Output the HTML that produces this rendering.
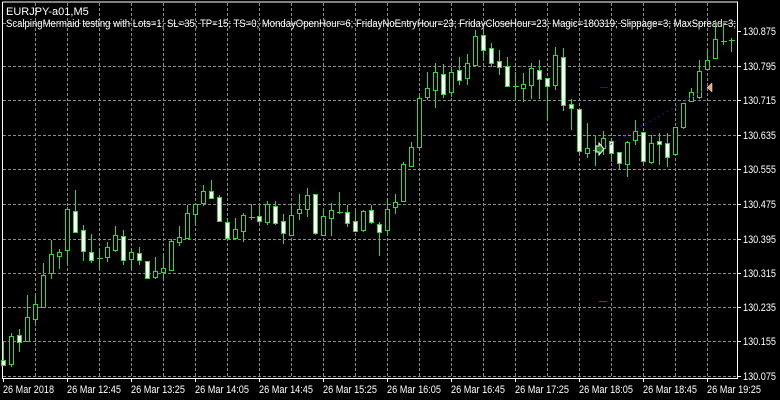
<!DOCTYPE html>
<html><head><meta charset="utf-8"><style>
html,body{margin:0;padding:0;background:#000;width:780px;height:400px;overflow:hidden}
svg{display:block}
text{font-family:"Liberation Sans",sans-serif;font-size:11px;fill:#fff}
.t{font-size:10.5px}
.p{font-size:10.5px}
</style></head><body>
<svg width="780" height="400" xmlns="http://www.w3.org/2000/svg">
<rect width="780" height="400" fill="#000"/>
<g stroke="#8c8c8c" stroke-width="1" stroke-dasharray="3 2" shape-rendering="crispEdges">
<path d="M3 23.5H737M3 66.5H737M3 100.5H737M3 135.5H737M3 169.5H737M3 204.5H737M3 239.5H737M3 273.5H737M3 307.5H737M3 341.5H737M3 376.5H737"/>
<path d="M35.5 3V378M67.5 3V378M99.5 3V378M131.5 3V378M163.5 3V378M195.5 3V378M227.5 3V378M259.5 3V378M291.5 3V378M323.5 3V378M355.5 3V378M387.5 3V378M419.5 3V378M451.5 3V378M483.5 3V378M515.5 3V378M547.5 3V378M579.5 3V378M611.5 3V378M643.5 3V378M675.5 3V378M707.5 3V378"/>
</g>
<g stroke="#fff" stroke-width="1" fill="none" shape-rendering="crispEdges">
<path d="M2.5 2V378.5H737.5V2H2.5"/>
<path d="M737 31.5h4M737 66.5h4M737 100.5h4M737 135.5h4M737 169.5h4M737 204.5h4M737 239.5h4M737 273.5h4M737 307.5h4M737 341.5h4M737 376.5h4"/>
<path d="M3.5 378v4M67.5 378v4M131.5 378v4M195.5 378v4M259.5 378v4M323.5 378v4M387.5 378v4M451.5 378v4M515.5 378v4M579.5 378v4M643.5 378v4M707.5 378v4"/>
</g>
<text x="6" y="15">EURJPY-a01,M5</text>
<text x="6" y="27" textLength="730" lengthAdjust="spacingAndGlyphs">ScalpingMermaid testing with Lots=1; SL=35; TP=15; TS=0; MondayOpenHour=6; FridayNoEntryHour=23; FridayCloseHour=23; Magic=180319; Slippage=3; MaxSpread=3;</text>
<g class="p">
<text x="743" y="35" textLength="33" lengthAdjust="spacingAndGlyphs">130.875</text><text x="743" y="70" textLength="33" lengthAdjust="spacingAndGlyphs">130.795</text><text x="743" y="104" textLength="33" lengthAdjust="spacingAndGlyphs">130.715</text><text x="743" y="139" textLength="33" lengthAdjust="spacingAndGlyphs">130.635</text><text x="743" y="173" textLength="33" lengthAdjust="spacingAndGlyphs">130.555</text><text x="743" y="208" textLength="33" lengthAdjust="spacingAndGlyphs">130.475</text><text x="743" y="243" textLength="33" lengthAdjust="spacingAndGlyphs">130.395</text><text x="743" y="277" textLength="33" lengthAdjust="spacingAndGlyphs">130.315</text><text x="743" y="311" textLength="33" lengthAdjust="spacingAndGlyphs">130.235</text><text x="743" y="345" textLength="33" lengthAdjust="spacingAndGlyphs">130.155</text><text x="743" y="380" textLength="33" lengthAdjust="spacingAndGlyphs">130.075</text>
</g>
<g class="t">
<text x="3" y="393" textLength="51" lengthAdjust="spacingAndGlyphs">26 Mar 2018</text><text x="67" y="393" textLength="54" lengthAdjust="spacingAndGlyphs">26 Mar 12:45</text><text x="131" y="393" textLength="54" lengthAdjust="spacingAndGlyphs">26 Mar 13:25</text><text x="195" y="393" textLength="54" lengthAdjust="spacingAndGlyphs">26 Mar 14:05</text><text x="259" y="393" textLength="54" lengthAdjust="spacingAndGlyphs">26 Mar 14:45</text><text x="323" y="393" textLength="54" lengthAdjust="spacingAndGlyphs">26 Mar 15:25</text><text x="387" y="393" textLength="54" lengthAdjust="spacingAndGlyphs">26 Mar 16:05</text><text x="451" y="393" textLength="54" lengthAdjust="spacingAndGlyphs">26 Mar 16:45</text><text x="515" y="393" textLength="54" lengthAdjust="spacingAndGlyphs">26 Mar 17:25</text><text x="579" y="393" textLength="54" lengthAdjust="spacingAndGlyphs">26 Mar 18:05</text><text x="643" y="393" textLength="54" lengthAdjust="spacingAndGlyphs">26 Mar 18:45</text><text x="707" y="393" textLength="54" lengthAdjust="spacingAndGlyphs">26 Mar 19:25</text>
</g>
<g stroke="#3fd23f" stroke-width="1" shape-rendering="crispEdges">
<path d="M3.5 342V366M11.5 333V367M19.5 329V352M27.5 295V341M35.5 295V323M43.5 263V307M51.5 240V279M59.5 249V269M67.5 207V263M75.5 190V232M83.5 225V261M91.5 234V263M99.5 248V269M107.5 242V262M115.5 226V252M123.5 230V265M131.5 248V269M139.5 247V265M147.5 261V279M155.5 257V279M163.5 254V280M171.5 239V270M179.5 226V246M187.5 205V238M195.5 204V226M203.5 185V206M211.5 180V198M219.5 195V222M227.5 218V238M235.5 218V238M243.5 213V242M251.5 204V220M259.5 206V225M267.5 201V225M275.5 201V225M283.5 214V244M291.5 205V235M299.5 194V220M307.5 188V217M315.5 194V235M323.5 210V235M331.5 203V236M339.5 192V214M347.5 205V227M355.5 211V232M363.5 210V232M371.5 205V224M379.5 222V256M387.5 198V233M395.5 194V214M403.5 162V201M411.5 142V166M419.5 96V147M427.5 72V100M435.5 63V108M443.5 64V98M451.5 67V97M459.5 57V85M467.5 54V85M475.5 30V65M483.5 30V58M491.5 43V67M499.5 50V75M507.5 57V86M515.5 72V99M523.5 73V102M531.5 63V99M539.5 60V99M547.5 78V120M555.5 47V90M563.5 48V111M571.5 99V130M579.5 109V153M587.5 123V158M595.5 136V166M603.5 131V155M611.5 138V162M619.5 152V170M627.5 141V177M635.5 120V145M643.5 132V163M651.5 135V164M659.5 133V165M667.5 133V167M675.5 127V155M683.5 103V129M691.5 88V101M699.5 60V99M707.5 50V70M715.5 20V58M723.5 23V45M731.5 38V52"/>
<path d="M97 258.5h6M249 217.5h6M337 212.5h6M513 86.5h6M593 150.5h6M721 41.5h6M729 40.5h6"/>
</g>
<g fill="#000" stroke="#3fd23f" stroke-width="1" shape-rendering="crispEdges">
<rect x="9.5" y="336.5" width="4" height="28"/><rect x="25.5" y="317.5" width="4" height="24"/><rect x="33.5" y="304.5" width="4" height="15"/><rect x="41.5" y="275.5" width="4" height="32"/><rect x="49.5" y="254.5" width="4" height="19"/><rect x="57.5" y="252.5" width="4" height="4"/><rect x="65.5" y="209.5" width="4" height="41"/><rect x="105.5" y="247.5" width="4" height="10"/><rect x="113.5" y="235.5" width="4" height="15"/><rect x="129.5" y="252.5" width="4" height="7"/><rect x="153.5" y="271.5" width="4" height="6"/><rect x="161.5" y="268.5" width="4" height="4"/><rect x="169.5" y="241.5" width="4" height="29"/><rect x="177.5" y="237.5" width="4" height="5"/><rect x="185.5" y="213.5" width="4" height="25"/><rect x="193.5" y="204.5" width="4" height="10"/><rect x="201.5" y="191.5" width="4" height="12"/><rect x="233.5" y="229.5" width="4" height="9"/><rect x="241.5" y="215.5" width="4" height="16"/><rect x="265.5" y="204.5" width="4" height="18"/><rect x="289.5" y="215.5" width="4" height="20"/><rect x="297.5" y="209.5" width="4" height="4"/><rect x="305.5" y="195.5" width="4" height="14"/><rect x="321.5" y="216.5" width="4" height="19"/><rect x="329.5" y="210.5" width="4" height="8"/><rect x="361.5" y="211.5" width="4" height="19"/><rect x="385.5" y="209.5" width="4" height="21"/><rect x="393.5" y="202.5" width="4" height="5"/><rect x="401.5" y="164.5" width="4" height="37"/><rect x="409.5" y="147.5" width="4" height="19"/><rect x="417.5" y="98.5" width="4" height="49"/><rect x="425.5" y="88.5" width="4" height="9"/><rect x="433.5" y="72.5" width="4" height="18"/><rect x="449.5" y="72.5" width="4" height="20"/><rect x="465.5" y="63.5" width="4" height="15"/><rect x="473.5" y="36.5" width="4" height="29"/><rect x="521.5" y="84.5" width="4" height="4"/><rect x="529.5" y="68.5" width="4" height="17"/><rect x="553.5" y="55.5" width="4" height="30"/><rect x="585.5" y="148.5" width="4" height="5"/><rect x="601.5" y="138.5" width="4" height="10"/><rect x="625.5" y="142.5" width="4" height="22"/><rect x="633.5" y="131.5" width="4" height="9"/><rect x="649.5" y="143.5" width="4" height="19"/><rect x="673.5" y="127.5" width="4" height="27"/><rect x="681.5" y="103.5" width="4" height="24"/><rect x="689.5" y="92.5" width="4" height="9"/><rect x="697.5" y="71.5" width="4" height="26"/><rect x="705.5" y="60.5" width="4" height="9"/><rect x="713.5" y="39.5" width="4" height="19"/>
</g>
<g fill="#fff" stroke="#3fd23f" stroke-width="1" shape-rendering="crispEdges">
<rect x="1.5" y="360.5" width="4" height="5"/><rect x="17.5" y="335.5" width="4" height="7"/><rect x="73.5" y="211.5" width="4" height="21"/><rect x="81.5" y="230.5" width="4" height="21"/><rect x="89.5" y="252.5" width="4" height="8"/><rect x="121.5" y="236.5" width="4" height="24"/><rect x="137.5" y="253.5" width="4" height="7"/><rect x="145.5" y="261.5" width="4" height="17"/><rect x="209.5" y="191.5" width="4" height="7"/><rect x="217.5" y="197.5" width="4" height="24"/><rect x="225.5" y="222.5" width="4" height="16"/><rect x="257.5" y="216.5" width="4" height="5"/><rect x="273.5" y="206.5" width="4" height="17"/><rect x="281.5" y="221.5" width="4" height="12"/><rect x="313.5" y="194.5" width="4" height="39"/><rect x="345.5" y="212.5" width="4" height="11"/><rect x="353.5" y="221.5" width="4" height="10"/><rect x="369.5" y="210.5" width="4" height="12"/><rect x="377.5" y="224.5" width="4" height="8"/><rect x="441.5" y="74.5" width="4" height="20"/><rect x="457.5" y="70.5" width="4" height="10"/><rect x="481.5" y="35.5" width="4" height="15"/><rect x="489.5" y="48.5" width="4" height="15"/><rect x="497.5" y="61.5" width="4" height="6"/><rect x="505.5" y="66.5" width="4" height="20"/><rect x="537.5" y="70.5" width="4" height="9"/><rect x="545.5" y="78.5" width="4" height="8"/><rect x="561.5" y="57.5" width="4" height="48"/><rect x="569.5" y="104.5" width="4" height="4"/><rect x="577.5" y="109.5" width="4" height="42"/><rect x="609.5" y="141.5" width="4" height="12"/><rect x="617.5" y="152.5" width="4" height="11"/><rect x="641.5" y="132.5" width="4" height="29"/><rect x="657.5" y="141.5" width="4" height="3"/><rect x="665.5" y="143.5" width="4" height="14"/>
</g>
<path d="M606 147L708 88" stroke="#1a1a9a" stroke-width="1" stroke-dasharray="2 3"/>
<path d="M600 87.5h8" stroke="#1c1c8c" stroke-width="1"/>
<path d="M599 301.5h8" stroke="#a52020" stroke-width="1"/>
<path d="M596 146h3v-3l5 6-5 6v-3h-3z" fill="#1f7a1f" stroke="#fff" stroke-width="1"/>
<path d="M712 83v9l-5-4.5z" fill="#e0a860" stroke="#fff" stroke-width="0.5"/>
</svg>
</body></html>
